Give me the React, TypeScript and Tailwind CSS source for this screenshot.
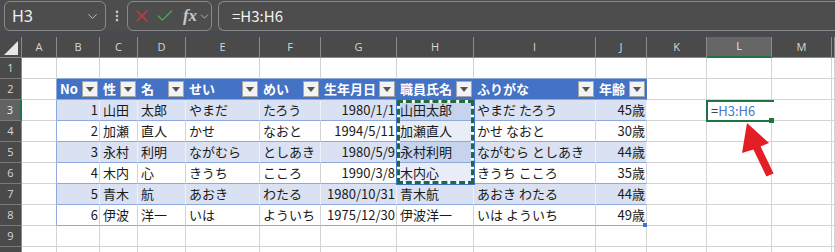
import { ChevronDown, X, Check, EllipsisVertical } from "lucide-react";

const LETTERS = ["A", "B", "C", "D", "E", "F", "G", "H", "I", "J", "K", "L", "M", ""];
const HEADERS = ["No", "性", "名", "せい", "めい", "生年月日", "職員氏名", "ふりがな", "年齢"];
const DATA = [
  ["1", "山田", "太郎", "やまだ", "たろう", "1980/1/1", "山田太郎", "やまだ たろう", "45歳"],
  ["2", "加瀬", "直人", "かせ", "なおと", "1994/5/11", "加瀬直人", "かせ なおと", "30歳"],
  ["3", "永村", "利明", "ながむら", "としあき", "1980/5/9", "永村利明", "ながむら としあき", "44歳"],
  ["4", "木内", "心", "きうち", "こころ", "1990/3/8", "木内心", "きうち こころ", "35歳"],
  ["5", "青木", "航", "あおき", "わたる", "1980/10/31", "青木航", "あおき わたる", "44歳"],
  ["6", "伊波", "洋一", "いは", "よういち", "1975/12/30", "伊波洋一", "いは よういち", "49歳"],
];
const RIGHT = [0, 5, 8];

const grid =
  "grid grid-cols-[22px_35px_43px_38px_48px_74px_61px_76px_77px_122px_51px_60px_65px_60px_3px]";

function FilterButton() {
  return (
    <div className="ml-auto mr-px flex h-[16px] w-[16px] shrink-0 items-center justify-center border border-[#a6a6a6] bg-[#f3f3f3]">
      <svg width="8" height="5" viewBox="0 0 8 5">
        <path d="M0 0 L8 0 L4 5 Z" fill="#555" />
      </svg>
    </div>
  );
}

function Cell({ r, c }: { r: number; c: number }) {
  const inTable = r >= 2 && r <= 8 && c >= 1 && c <= 9;
  // column A borders the table's left edge
  if (c === 0 && r >= 2 && r <= 8) {
    return <div className="border-b border-r border-[#d4d4d4] border-r-[#8ea9db] bg-white" />;
  }
  if (!inTable) {
    const topOfTable = r === 1 && c >= 1 && c <= 9;
    return (
      <div
        className={
          "border-b border-r border-[#d4d4d4] bg-white " + (topOfTable ? "border-b-[#8ea9db]" : "")
        }
      />
    );
  }
  const k = c - 1;
  if (r === 2) {
    return (
      <div className="flex items-center border-b border-r border-[#4472c4] border-b-[#8ea9db] bg-[#4472c4] pl-[3px] text-[13px] font-bold text-white">
        <span>{HEADERS[k]}</span>
        <FilterButton />
      </div>
    );
  }
  const band = (r - 3) % 2 === 0;
  const sel = k === 6 && r <= 6;
  let bg = band ? "bg-[#d9e1f2] border-r-[#eef2f9]" : "bg-white border-r-[#d4d4d4]";
  if (sel) bg = band ? "bg-[#c6d3ec] border-r-[#eef2f9]" : "bg-[#e8edf7] border-r-[#d4d4d4]";
  if (k === 8) bg += " border-r-[#8ea9db]";
  const right = RIGHT.includes(k);
  return (
    <div
      className={
        "flex items-center overflow-visible whitespace-nowrap border-b border-r border-b-[#8ea9db] text-[13px] text-[#1a1a1a] " +
        bg +
        (right ? " justify-end pr-[1px]" : " pl-[3px]")
      }
    >
      {DATA[r - 3][k]}
    </div>
  );
}

export default function App() {
  return (
    <div
      className="relative h-[252px] w-[835px] overflow-hidden bg-white"
      style={{ fontFamily: '"Noto Sans CJK JP", "Noto Sans", sans-serif' }}
    >
      {/* formula bar */}
      <div className="flex h-[31px] items-start gap-0 bg-[#4d4d4d] pt-px">
        <div className="ml-[4px] flex h-[30px] w-[102px] items-center rounded-[6px] border border-[#8a8a8a] pl-[7px] pr-[5px]">
          <span className="text-[16px] text-[#f0f0f0]" style={{ fontFamily: '"Noto Sans", sans-serif' }}>
            H3
          </span>
          <ChevronDown className="ml-auto text-[#c8c8c8]" size={15} strokeWidth={1.5} />
        </div>
        <div className="flex h-[30px] w-[21px] items-center justify-center">
          <EllipsisVertical className="text-[#c8c8c8]" size={14} strokeWidth={2.5} />
        </div>
        <div className="flex h-[30px] w-[85px] items-center rounded-[6px] border border-[#8a8a8a] pl-[4px]">
          <X className="text-[#d9363e]" size={20} strokeWidth={1.4} />
          <Check className="ml-[3px] text-[#4fae5a]" size={20} strokeWidth={1.4} />
          <span
            className="ml-[8px] text-[17px] font-bold italic text-[#c9c9c9]"
            style={{ fontFamily: '"Liberation Serif", serif' }}
          >
            fx
          </span>
          <ChevronDown className="ml-[1px] text-[#c8c8c8]" size={13} strokeWidth={1.5} />
        </div>
        <div className="ml-[6px] flex h-[30px] flex-1 items-center rounded-l-[6px] border border-r-0 border-[#8a8a8a] pl-[13px]">
          <span className="text-[15px] text-[#f2f2f2]">=H3:H6</span>
        </div>
      </div>
      <div className="h-[6px] bg-[#484a4e]" />

      <div className="relative">
        {/* column letters */}
        <div className={grid + " h-[21px] bg-[#4a4a4a]"}>
          <div className="relative border-b border-r border-[#8a8a8a]">
            <svg className="absolute left-[4px] top-[4px]" width="14" height="14" viewBox="0 0 14 14">
              <path d="M14 0 L14 14 L0 14 Z" fill="#e6e6e6" />
            </svg>
          </div>
          {LETTERS.map((l, i) =>
            l === "L" ? (
              <div
                key={i}
                className="flex items-center justify-center border-b-2 border-r border-[#8a8a8a] border-b-[#217346] bg-[#666666] text-[11px] text-[#e8e8e8]"
                style={{ fontFamily: '"Open Sans", sans-serif' }}
              >
                {l}
              </div>
            ) : (
              <div
                key={i}
                className="flex items-center justify-center border-b border-r border-[#8a8a8a] text-[11px] text-[#d8d8d8]"
                style={{ fontFamily: '"Open Sans", sans-serif' }}
              >
                {l}
              </div>
            ),
          )}
        </div>

        {/* rows */}
        {[1, 2, 3, 4, 5, 6, 7, 8, 9, 10].map((r) => (
          <div key={r} className={grid + " h-[21px]"}>
            <div
              className={
                "flex items-center justify-center border-b border-[#7a7a7a] text-[11px] " +
                (r === 3
                  ? "border-r-2 border-r-[#217346] bg-[#626262] text-[#ececec]"
                  : "border-r border-r-[#8a8a8a] bg-[#4a4a4a] text-[#d8d8d8]")
              }
              style={{ fontFamily: '"Open Sans", sans-serif' }}
            >
              {r < 10 ? r : ""}
            </div>
            {LETTERS.map((_, c) => (
              <Cell key={c} r={r} c={c} />
            ))}
          </div>
        ))}

        {/* copy marquee around H3:H6 */}
        <div className="absolute left-[396px] top-[62px] h-[86px] w-[79px] border border-[#4472c4]">
          <div className="absolute inset-0 border-[3px] border-white" />
          <div className="absolute inset-0 border-[3px] border-dashed border-[#1e6b40]" />
        </div>

        {/* table resize handle */}
        <div className="absolute left-[643px] top-[186px] h-[4px] w-[4px] bg-[#4472c4]" />

        {/* L3 in edit mode */}
        <div className="absolute left-[706px] top-[63px] flex h-[22px] w-[68px] items-center border-b-2 border-l-2 border-t-2 border-[#217346] bg-white pl-[3px] text-[13px]">
          <span className="text-[#111]">=</span>
          <span className="text-[#4a76c9]">H3:H6</span>
          <div className="absolute -bottom-[3px] right-0 h-[5px] w-[5px] bg-[#217346]" />
        </div>

        {/* red arrow */}
        <svg className="absolute left-[735px] top-[78px]" width="45" height="70" viewBox="0 0 45 70">
          <path
            d="M12 8 L34 28 L25.6 31.4 L38.6 58.4 L31.4 61.6 L18.4 34.6 L7 38 Z"
            fill="#e31e24"
          />
        </svg>
      </div>
    </div>
  );
}
